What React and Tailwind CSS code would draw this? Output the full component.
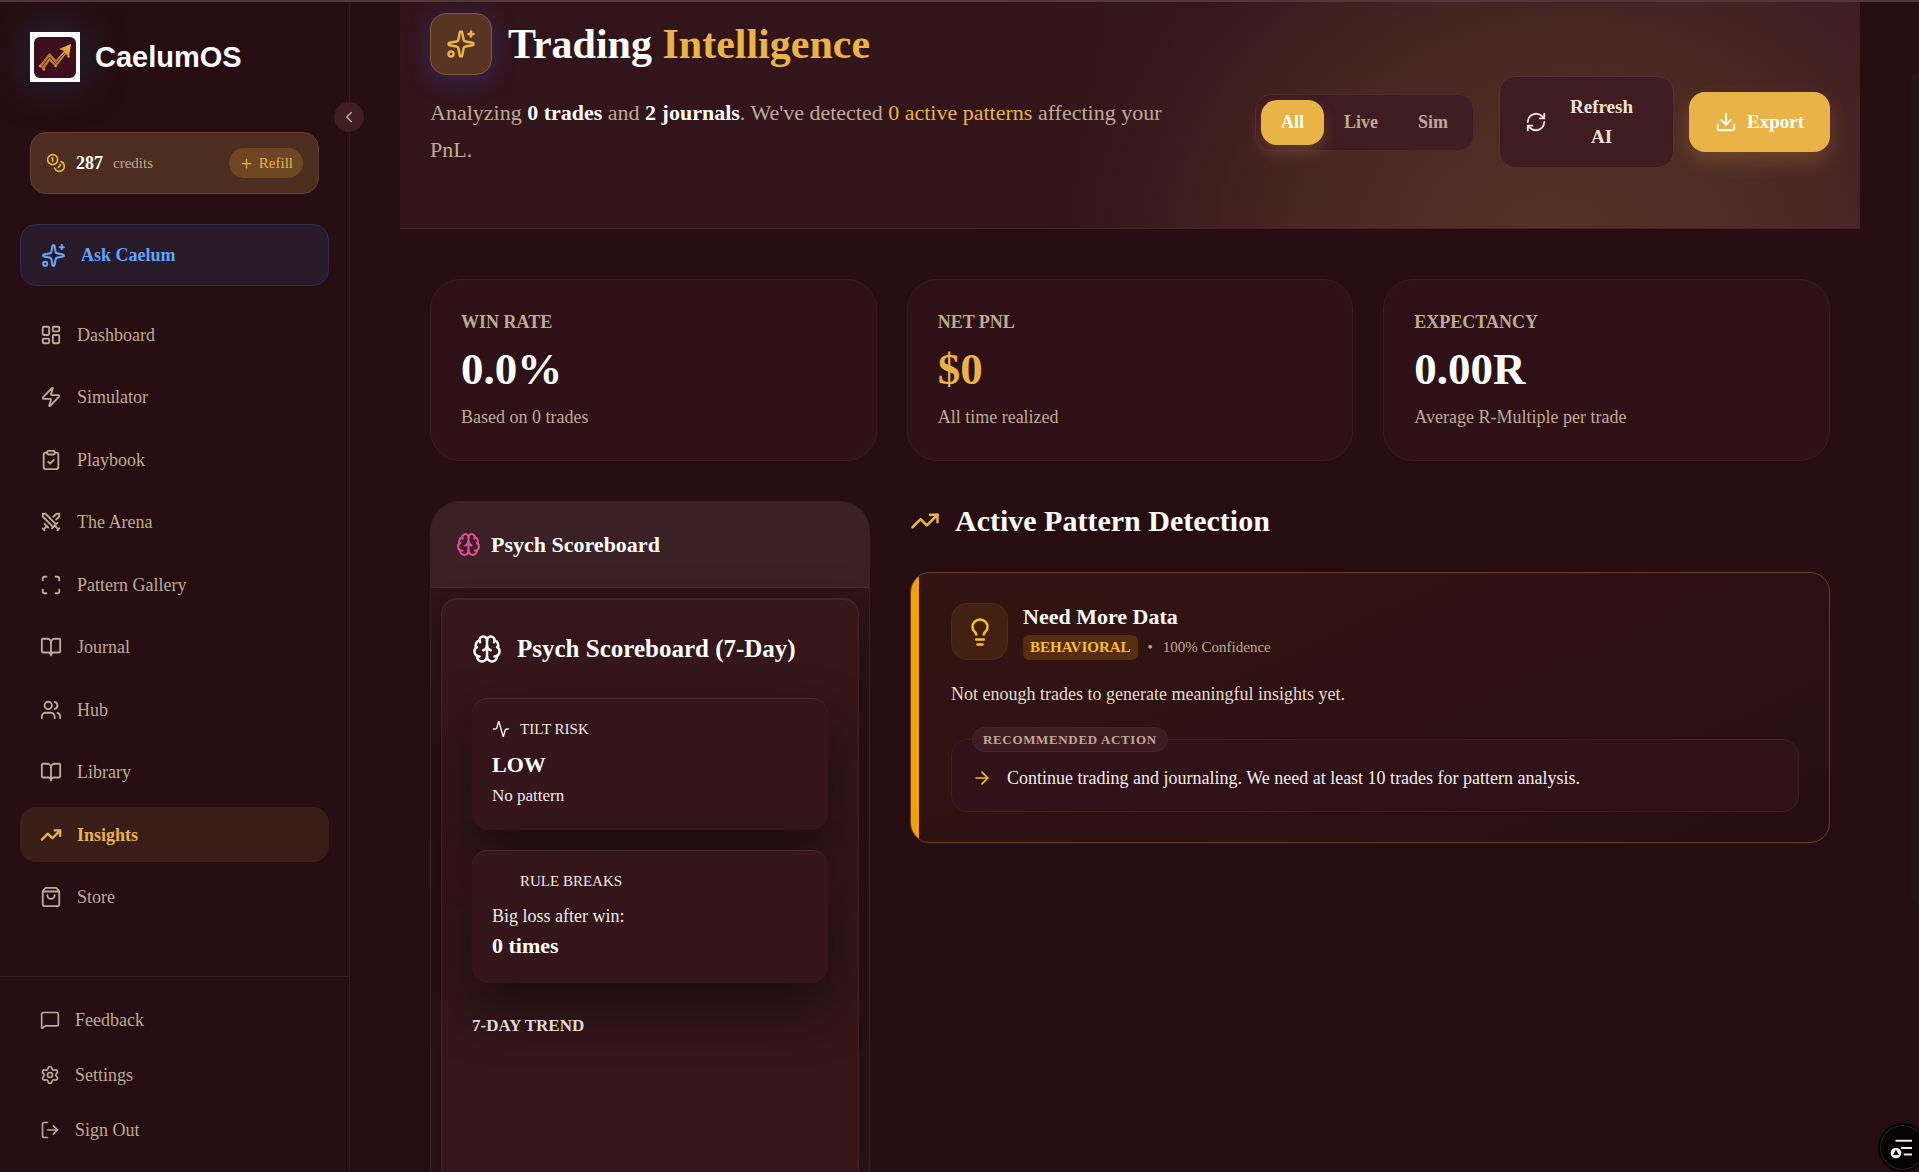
import { useState } from "react";
import {
  Activity,
  ArrowRight,
  BookOpen,
  Brain,
  ChevronLeft,
  ClipboardCheck,
  Coins,
  Download,
  LayoutDashboard,
  Lightbulb,
  LogOut,
  MessageSquare,
  Plus,
  RefreshCw,
  Scan,
  Settings,
  ShoppingBag,
  Sparkles,
  Swords,
  TrendingUp,
  Users,
  Zap,
} from "lucide-react";

const navItems = [
  { label: "Dashboard", icon: LayoutDashboard },
  { label: "Simulator", icon: Zap },
  { label: "Playbook", icon: ClipboardCheck },
  { label: "The Arena", icon: Swords },
  { label: "Pattern Gallery", icon: Scan },
  { label: "Journal", icon: BookOpen },
  { label: "Hub", icon: Users },
  { label: "Library", icon: BookOpen },
  { label: "Insights", icon: TrendingUp, active: true },
  { label: "Store", icon: ShoppingBag },
];

const footerItems = [
  { label: "Feedback", icon: MessageSquare },
  { label: "Settings", icon: Settings },
  { label: "Sign Out", icon: LogOut },
];

const stats = [
  { label: "WIN RATE", value: "0.0%", note: "Based on 0 trades" },
  { label: "NET PNL", value: "$0", note: "All time realized", gold: true },
  { label: "EXPECTANCY", value: "0.00R", note: "Average R-Multiple per trade" },
];

const Logo = () => (
  <svg
    viewBox="0 0 50 50"
    className="size-[50px] shrink-0 shadow-[0_0_40px_rgba(30,70,120,0.55)]"
    aria-hidden="true"
  >
    <defs>
      <linearGradient id="logoGold" x1="0" y1="1" x2="1" y2="0">
        <stop offset="0" stopColor="#b06c20" />
        <stop offset="0.5" stopColor="#c08030" />
        <stop offset="1" stopColor="#f0bd55" />
      </linearGradient>
    </defs>
    <rect width="50" height="50" fill="#fff" />
    <rect x="4" y="5" width="42" height="41" rx="6" fill="#3b0f1e" />
    <path
      d="M9 34 19.500 21l6.500 7 8-9-5-2L41 12l-2 13-3-3L26 35l-6.500-6-6 9z"
      fill="url(#logoGold)"
    />
    <path
      d="M12 34.500 19.500 25l6 6.500L35 21"
      fill="none"
      stroke="#5a2412"
      strokeWidth="0.9"
    />
    <g fill="#d99a3c">
      <circle cx="10" cy="34" r="1.200" />
      <circle cx="14" cy="37.500" r="1.200" />
      <circle cx="25.500" cy="34" r="1.200" />
      <circle cx="38.500" cy="24.500" r="1.200" />
    </g>
  </svg>
);

const Sidebar = () => (
  <aside className="relative flex w-[350px] shrink-0 flex-col border-r border-[#37191f] text-[#bcab94]">
    <button
      type="button"
      aria-label="Collapse sidebar"
      className="absolute top-[100px] -right-[15px] z-10 flex size-[30px] items-center justify-center rounded-full bg-[#401c23]"
    >
      <ChevronLeft size={18} />
    </button>

    <div className="flex items-center gap-[15px] px-[30px] pt-[30px]">
      <Logo />
      <span className="font-['Liberation_Sans',Arial,sans-serif] text-[29px] leading-9 font-bold text-white">
        CaelumOS
      </span>
    </div>

    <div className="mx-[30px] mt-[50px] flex h-[62px] items-center rounded-2xl border border-[#5f4030] bg-[#4c2d1f] px-[15px]">
      <Coins size={20} className="text-[#e9b347]" />
      <span className="ml-[10px] text-lg font-bold text-white">287</span>
      <span className="ml-[10px] text-[15px]">credits</span>
      <button
        type="button"
        className="ml-auto flex h-[30px] items-center gap-[5px] rounded-full bg-[#6c4722] px-[10px] text-[15px] text-[#e9b347]"
      >
        <Plus size={15} />
        Refill
      </button>
    </div>

    <a
      href="#ask"
      className="mx-5 mt-[30px] flex h-[62px] items-center gap-[15px] rounded-2xl border border-[#2a2c55] bg-[#281a28] px-5 text-lg font-bold text-[#60a5fa]"
    >
      <Sparkles size={25} />
      Ask Caelum
    </a>

    <nav className="flex flex-1 flex-col justify-between px-5 pt-[21px] pb-[51px] text-lg">
      {navItems.map(({ label, icon: Icon, active }) => (
        <a
          key={label}
          href="#nav"
          className={`flex h-[55px] items-center gap-[15px] rounded-2xl px-5 ${
            active ? "bg-[#391e18] font-bold text-[#e9b347]" : ""
          }`}
        >
          <Icon size={22} strokeWidth={active ? 2.5 : 2} />
          {label}
        </a>
      ))}
    </nav>

    <div className="flex flex-col gap-[10px] border-t border-[#37191f] px-5 py-5 text-lg">
      {footerItems.map(({ label, icon: Icon }) => (
        <a
          key={label}
          href="#nav"
          className="flex h-[45px] items-center gap-[15px] px-5"
        >
          <Icon size={20} />
          {label}
        </a>
      ))}
    </div>
  </aside>
);

const PageHeader = () => {
  const [mode, setMode] = useState("All");

  return (
    <header className="flex items-end justify-between gap-6 border-b border-[#3f2125] bg-[radial-gradient(ellipse_460px_380px_at_78%_108%,rgba(234,179,71,0.16),rgba(234,179,71,0.1)_50%,transparent),linear-gradient(100deg,#32151a_40%,#3d1b21)] px-[30px] pt-[11px] pb-[60px]">
      <div className="max-w-[765px]">
        <div className="flex items-center gap-4">
          <div className="flex size-[62px] items-center justify-center rounded-2xl border border-[#85592b] bg-[#573423] text-[#e9b347] shadow-[0_4px_24px_rgba(79,70,229,0.35)]">
            <Sparkles size={30} />
          </div>
          <h1 className="text-[42px] leading-[62px] font-bold text-white">
            Trading <span className="text-[#e9b347]">Intelligence</span>
          </h1>
        </div>
        <p className="mt-[19px] text-[22px] leading-[37px] text-[#bcab94]">
          Analyzing <strong className="text-white">0 trades</strong> and{" "}
          <strong className="text-white">2 journals</strong>. We've detected{" "}
          <span className="text-[#e9b347]">0 active patterns</span> affecting
          your PnL.
        </p>
      </div>

      <div className="flex shrink-0 items-center">
        <div className="flex rounded-2xl border border-[#4d2830] bg-[#3f1b22] p-[5px]">
          {["All", "Live", "Sim"].map((item) => (
            <button
              key={item}
              type="button"
              onClick={() => setMode(item)}
              className={`h-[45px] rounded-2xl px-5 text-lg font-bold ${
                mode === item
                  ? "bg-[#e9b347] text-white shadow-[0_8px_16px_rgba(233,179,71,0.2)]"
                  : "text-[#bcab94]"
              }`}
            >
              {item}
            </button>
          ))}
        </div>
        <button
          type="button"
          className="ml-[25px] flex w-[175px] items-center rounded-2xl border border-[#53303a] bg-[#3f1b22] px-[25px] py-[15px] text-[19px] leading-[30px] font-bold text-[#eee4d6]"
        >
          <RefreshCw size={22} />
          <span className="flex-1 pl-2 text-center">
            Refresh
            <br />
            AI
          </span>
        </button>
        <button
          type="button"
          className="ml-[15px] flex h-[60px] items-center gap-[10px] rounded-2xl bg-[#e9b347] px-[26px] text-[19px] font-bold text-white shadow-[0_10px_20px_rgba(233,179,71,0.2)]"
        >
          <Download size={22} />
          Export
        </button>
      </div>
    </header>
  );
};

const StatCard = ({ label, value, note, gold }) => (
  <div className="rounded-[30px] border border-[#371d21] bg-[#2d1116] px-[30px] pt-[27px] pb-[28px]">
    <div className="text-lg leading-[30px] font-bold text-[#bcab94]">
      {label}
    </div>
    <div
      className={`mt-[10px] text-[45px] leading-[45px] font-bold ${
        gold ? "text-[#e9b347]" : "text-white"
      }`}
    >
      {value}
    </div>
    <div className="mt-[10px] text-lg leading-[30px] text-[#bcab94]">
      {note}
    </div>
  </div>
);

const cardShadow =
  "rounded-2xl border-t border-[#4a2a30] bg-[#33151a] p-5 shadow-[0_25px_50px_rgba(8,6,8,0.55)]";

const PsychScoreboard = () => (
  <section className="col-span-4 flex flex-col overflow-hidden rounded-t-[30px] border border-b-0 border-[#3a2026] bg-[#30141a]">
    <h2 className="flex h-[86px] shrink-0 items-center gap-[10px] border-b border-[#482a2e] bg-[#3b2026] px-[25px] text-[22px] font-bold text-white">
      <Brain size={25} className="text-[#ec4899]" />
      Psych Scoreboard
    </h2>
    <div className="flex flex-1 flex-col px-[10px] pt-[10px]">
      <div className="flex-1 rounded-t-2xl border border-t-2 border-b-0 border-[#42252b] bg-[#34161b] px-[30px] pt-[30px] text-[#eeeae6] shadow-[0_15px_40px_rgba(8,6,8,0.6)]">
        <h3 className="flex items-center gap-[15px] text-[25px] leading-[38px] font-bold text-white">
          <Brain size={30} />
          Psych Scoreboard (7-Day)
        </h3>
        <div className="mt-[30px] flex flex-col gap-5">
          <div className={cardShadow}>
            <div className="flex items-center gap-[10px] text-[15px] leading-[20px]">
              <Activity size={18} />
              TILT RISK
            </div>
            <div className="mt-[10px] text-[22px] leading-[32px] font-bold text-white">
              LOW
            </div>
            <div className="text-[17px] leading-[29px]">No pattern</div>
          </div>
          <div className={cardShadow}>
            <div className="pl-[28px] text-[15px] leading-[20px]">
              RULE BREAKS
            </div>
            <div className="mt-[10px] text-lg leading-[30px]">
              Big loss after win:
            </div>
            <div className="pb-[3px] text-[22px] leading-[29px] font-bold text-white">
              0 times
            </div>
          </div>
        </div>
        <h4 className="mt-[30px] text-[17px] leading-[26px] font-bold text-[#dedad6]">
          7-DAY TREND
        </h4>
      </div>
    </div>
  </section>
);

const PatternDetection = () => (
  <section className="col-span-8">
    <h2 className="flex items-center gap-[15px] text-[30px] leading-[40px] font-bold text-white">
      <TrendingUp size={30} className="text-[#e9b347]" />
      Active Pattern Detection
    </h2>
    <article className="mt-[31px] flex overflow-hidden rounded-[20px] border border-[#693d10] bg-[linear-gradient(155deg,#311411,#2d1112_50%,#260e11)]">
      <div className="w-2 shrink-0 bg-[#f59e0b]" />
      <div className="flex-1 py-[30px] pr-[30px] pl-8">
        <div className="flex items-center gap-[15px]">
          <div className="flex size-[57px] items-center justify-center rounded-2xl border border-[#4c2b1c] bg-[#422012] text-[#fbbf24]">
            <Lightbulb size={30} />
          </div>
          <div>
            <h3 className="text-[22px] leading-[27px] font-bold text-white">
              Need More Data
            </h3>
            <div className="mt-[5px] flex h-[25px] items-center gap-[10px] text-[15px] text-[#bcab94]">
              <span className="rounded-md bg-[#562d0f] px-[7px] leading-[25px] font-bold text-[#fbbf24]">
                BEHAVIORAL
              </span>
              <span>•</span>
              <span>100% Confidence</span>
            </div>
          </div>
        </div>
        <p className="mt-5 text-lg leading-[28px] text-[#e3dccd]">
          Not enough trades to generate meaningful insights yet.
        </p>
        <div className="relative mt-[31px] flex h-[73px] items-center gap-[15px] rounded-2xl border border-[#3b1d23] bg-[#2f1217] px-5 pt-1 text-lg text-[#f3eeee]">
          <span className="absolute -top-[13px] left-5 rounded-full border border-[#45232a] bg-[#3f1b22] px-[10px] text-[13px] leading-[23px] font-bold tracking-wider text-[#bcab94]">
            RECOMMENDED ACTION
          </span>
          <ArrowRight size={20} className="text-[#fbb724]" />
          Continue trading and journaling. We need at least 10 trades for
          pattern analysis.
        </div>
      </div>
    </article>
  </section>
);

const App = () => (
  <div className="relative flex h-screen overflow-hidden border-t-2 border-[#523739] bg-[#260d11] font-['Liberation_Serif','Times_New_Roman',serif]">
    <Sidebar />

    <main className="flex min-w-0 flex-1 flex-col pr-[59px] pl-[50px]">
      <PageHeader />
      <div className="mt-[50px] grid grid-cols-3 gap-[30px] px-[30px]">
        {stats.map((stat) => (
          <StatCard key={stat.label} {...stat} />
        ))}
      </div>
      <div className="mt-10 grid flex-1 grid-cols-12 gap-10 px-[30px]">
        <PsychScoreboard />
        <PatternDetection />
      </div>
    </main>

    {/* scrollbar thumb */}
    <div className="absolute top-[70px] right-0 h-[71%] w-2 rounded-l-full bg-[#251317]" />

    <button
      type="button"
      aria-label="Open reader"
      className="absolute -right-2 bottom-0 flex size-[49px] items-center justify-center rounded-full border-2 border-black bg-[#060203] ring-1 ring-[#2f2b2c] ring-inset"
    >
      <svg viewBox="0 0 24 24" className="mr-1 size-[22px]" aria-hidden="true">
        <path
          d="M6 4h18M12 12h12M15 19h9"
          stroke="#e8e8e8"
          strokeWidth="2.200"
        />
        <circle cx="6.500" cy="17.500" r="5.800" fill="#fff" />
        <path d="M6.500 13.500 9.800 19.500H3.200z" fill="#111" />
      </svg>
    </button>
  </div>
);

export default App;
